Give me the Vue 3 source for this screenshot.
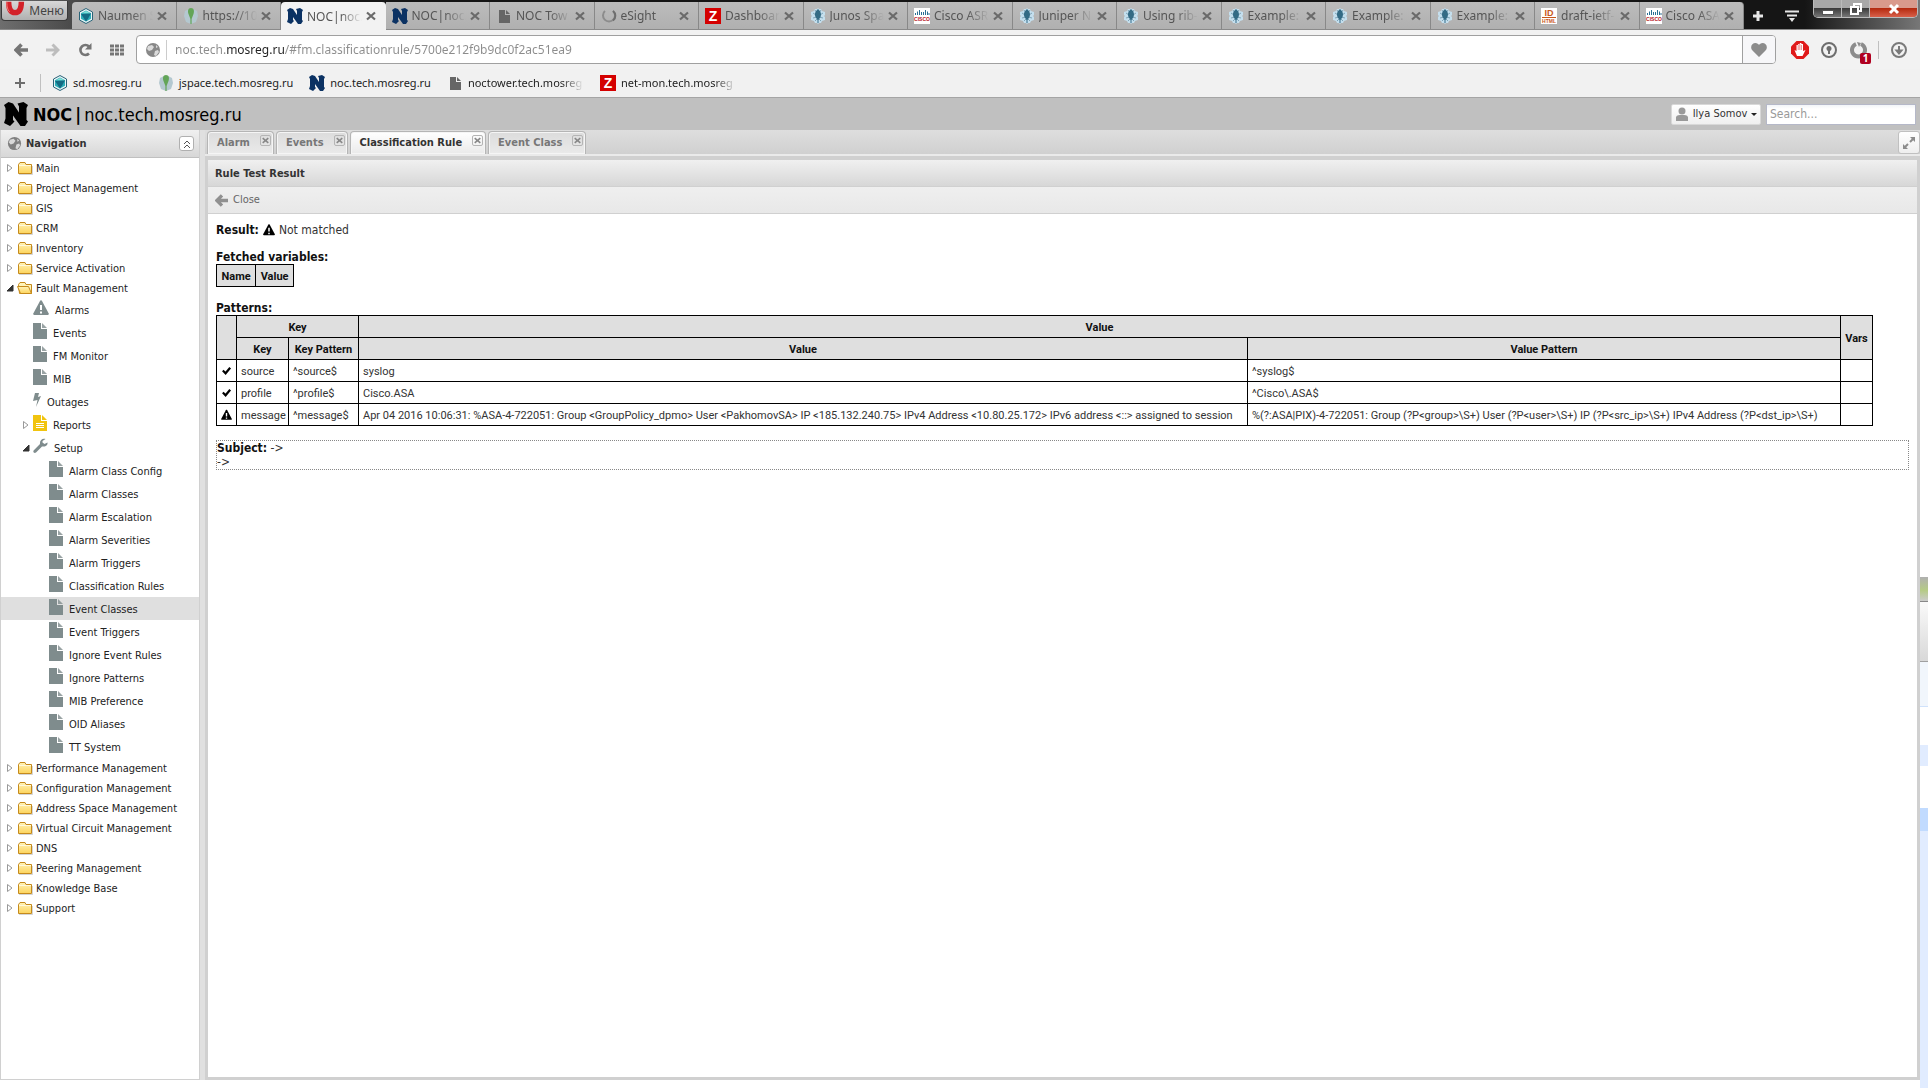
<!-- src/App.vue -->
<template>
  <!-- Shared icons -->
  <svg class="sprite" aria-hidden="true">
    <defs>
      <linearGradient id="folderFill" x1="0" y1="0" x2="0" y2="1">
        <stop offset="0" stop-color="#fff3b8" />
        <stop offset="1" stop-color="#fdd45c" />
      </linearGradient>
    </defs>
    <symbol id="naumen" viewBox="0 0 16 16">
      <path d="M8 0.5 14.5 4v8L8 15.5 1.5 12V4z" fill="#e8f3f5" stroke="#2a6478" />
      <path d="M8 2.5 13 5.2v5.6L8 13.5 3 10.8V5.2z" fill="#2badb8" />
      <path d="M3 6l10-.8-3 5.5L8 13.5z" fill="#146b83" />
      <path d="M4 5.3 8 3l4.5 2.3z" fill="#7fe0d8" />
    </symbol>
    <symbol id="jspace" viewBox="0 0 16 16">
      <path d="M2 3l4-2 2 2 2-2 4 2 1 5-2 6-5 2-5-2-2-6z" fill="#b4c8d0" />
      <path d="M8 0c3 0 3.500 3 2.500 6L8.600 11v5H7.400v-5L5.500 6C4.500 3 5 0 8 0z" fill="#63a558" />
    </symbol>
    <symbol id="noc" viewBox="0 0 16 16">
      <path d="M0 2l3-2 3 1 4 6V3L9 1l4-1 3 2-1 2v8l1 1-2 3h-3L6 9v3l1 1-3 3-4-2 1-3V4z" />
    </symbol>
    <symbol id="page" viewBox="0 0 16 16">
      <path d="M3 2h6v5h5v8H3z" />
      <path d="M10 2l4 4h-4z" />
    </symbol>
    <symbol id="spinner" viewBox="0 0 16 16">
      <path d="M4 3a6 6 0 1 0 8 0" fill="none" stroke="#8c8c8c" stroke-width="2" />
      <path d="M12 3a6 6 0 0 1 0 9.500" fill="none" stroke="#6e6e6e" stroke-width="2" />
    </symbol>
    <symbol id="zabbix" viewBox="0 0 16 16">
      <rect width="16" height="16" fill="#d40000" />
    </symbol>
    <symbol id="juniper" viewBox="0 0 16 16">
      <path d="M5 1h2l1-1 1 1h2l1 2 3 1v3l-1 1 1 1v3l-3 1-1 2H9l-1 1-1-1H5l-1-2-3-1V9l1-1-1-1V4l3-1z" fill="#c4dfee" />
      <path d="M3 5l3 2M13 5l-3 2M3 10l4-1M13 10l-4-1M5 2l2 3M11 2L9 5M5 13l2-2M11 13l-2-2" stroke="#7fa5b8" />
      <path d="M8 1c2 2 4 4 2.500 8l-2 3v3h-1v-3l-2-3C4 5 6 3 8 1z" fill="#336b85" />
    </symbol>
    <symbol id="cisco" viewBox="0 0 16 16">
      <rect width="16" height="16" fill="#fff" />
      <path d="M1.500 5v2M3.500 3.500V7M5.500 2v5M7.500 4v3M9.500 4v3M11.500 2v5M13.500 3.500V7M15 5v2" stroke="#2a6f94" />
    </symbol>
    <symbol id="ietf" viewBox="0 0 16 16">
      <rect width="16" height="16" fill="#fff" />
      <path d="M1 9.500h14" stroke="#c8581c" />
    </symbol>
    <symbol id="cross" viewBox="0 0 10 10">
      <path d="M1 1.500l8 7M9 1.500l-8 7" fill="none" stroke="currentColor" stroke-width="2.200" />
    </symbol>
    <symbol id="arrow" viewBox="0 0 14 14">
      <path d="M7.500 1.500L2 7l5.500 5.500M2 7h12" fill="none" stroke="currentColor" stroke-width="3.600" />
    </symbol>
    <symbol id="folder" viewBox="0 0 16 16">
      <path d="M1.500 13.500v-9l1.500-2h5l1 2h5.500v9z" fill="url(#folderFill)" stroke="#c58a1c" />
      <path d="M2 5.500h12" stroke="#fff9dc" />
      <path d="M2 14.500h13.500V6" fill="none" stroke="#b9b9b9" stroke-opacity=".6" />
    </symbol>
    <symbol id="folder-open" viewBox="0 0 16 16">
      <path d="M2.500 13.500l-1-9 1.500-2h5l1 2h5.500v9z" fill="#fff3b8" stroke="#c58a1c" />
      <path d="M3.500 13.500L.5 6.500h11l3 7z" fill="url(#folderFill)" stroke="#c58a1c" />
    </symbol>
    <symbol id="file" viewBox="0 0 14 16">
      <path d="M0 0h8v6h6v10H0z" />
      <path d="M9 0l5 5H9z" opacity=".8" />
    </symbol>
    <symbol id="report" viewBox="0 0 14 16">
      <path d="M0 0h8v6h6v10H0z" />
      <path d="M9 0l5 5H9z" />
      <path d="M3 8.500h8M3 10.500h8M3 12.500h8" stroke="#fff" />
    </symbol>
    <symbol id="warning" viewBox="0 0 16 16">
      <path d="M8 0l1 1 7 13-1 1H1l-1-1L7 1z" />
      <path d="M8 5v5M8 11.500v2" stroke="#fff" stroke-width="2" />
    </symbol>
    <symbol id="bolt" viewBox="0 0 8 16">
      <path d="M2 1h4L5 5l3-1-5 11 1.500-7L0 9z" />
    </symbol>
    <symbol id="wrench" viewBox="0 0 15 16">
      <path d="M14.500 4.500l-3 1.500-2-1.500V3l3-2c-3-1-6 1-5.500 5L.6 12.500c-1 2 1 3 2.400 2L9 8.500c3 .5 6-1 5.500-4z" />
    </symbol>
    <symbol id="check" viewBox="0 0 12 12">
      <path d="M2 5.500l3 3 5-6" fill="none" stroke="currentColor" stroke-width="2.400" />
    </symbol>
    <symbol id="globe" viewBox="0 0 16 16">
      <circle cx="8" cy="8" r="7" />
      <path d="M3 4l4-1 2 2-2 3-3 1-2-2zM10 9l3-1 1 2-3 4-2-1zM11 3l2 2-2 1z" fill="#fff" opacity=".7" />
    </symbol>
  </svg>

  <div class="screen">
    <div class="browser">
      <!-- Window tabs -->
      <div class="titlebar">
        <button class="menu-btn">
          <svg class="opera" viewBox="0 0 22 16">
            <path d="M4 0c0 9 3 12 7 12s7-3 7-12" fill="none" stroke="#d3222a" stroke-width="6" />
            <path d="M2 0c0 6 1 9 3 11" fill="none" stroke="#f58a8a" stroke-width="1" />
          </svg>
          <span>Меню</span>
        </button>
        <div class="window-tabs">
          <div v-for="(tab, i) in windowTabs" :key="i" class="window-tab" :class="{ active: tab.active }">
            <svg class="favicon" :class="tab.icon" viewBox="0 0 16 16">
              <use :href="'#' + tab.icon" />
              <text v-for="label in iconLabels[tab.icon]" :key="label.text" x="8" :y="label.y" :font-size="label.size">{{ label.text }}</text>
            </svg>
            <span class="window-tab-title">{{ tab.title }}</span>
            <button class="window-tab-close" aria-label="Close tab">
              <svg><use href="#cross" /></svg>
            </button>
          </div>
        </div>
        <div class="tab-tools">
          <button aria-label="New tab">
            <svg viewBox="0 0 14 14" width="14" height="14"><path d="M7 2v10M2 7h10" stroke="#e6e6e6" stroke-width="3" /></svg>
          </button>
          <button aria-label="Tab menu">
            <svg viewBox="0 0 14 14" width="14" height="14"><path d="M0 2.500h14M2 6.500h10" stroke="#e6e6e6" stroke-width="2" /><path d="M4 9h6l-3 4z" fill="#e6e6e6" /></svg>
          </button>
        </div>
        <div class="window-buttons">
          <button class="minimize" aria-label="Minimize">
            <svg viewBox="0 0 14 14"><rect x="1.500" y="8.500" width="11" height="4" fill="#fff" stroke="#555" /></svg>
          </button>
          <button class="restore" aria-label="Restore">
            <svg viewBox="0 0 14 14"><path d="M5 4V2h7v7h-2M2 5h7v7H2z" fill="none" stroke="#fff" stroke-width="2" /></svg>
          </button>
          <button class="quit" aria-label="Close window">
            <svg viewBox="0 0 14 14"><path d="M3 3l8 8M11 3l-8 8" stroke="#fff" stroke-width="3" /></svg>
          </button>
        </div>
      </div>

      <!-- Address bar -->
      <div class="address-row">
        <div class="nav-buttons">
          <button aria-label="Back"><svg viewBox="0 0 14 14"><use href="#arrow" /></svg></button>
          <button class="forward" aria-label="Forward"><svg viewBox="0 0 14 14"><path d="M6.500 1.500L12 7l-5.500 5.500M12 7H0" fill="none" stroke="currentColor" stroke-width="3" /></svg></button>
          <button aria-label="Reload"><svg viewBox="0 0 14 14"><path d="M11 10.500a5 5 0 1 1 0-7" fill="none" stroke="currentColor" stroke-width="2.600" /><path d="M13.500 0v6.500H7z" fill="currentColor" /></svg></button>
          <button aria-label="Speed Dial"><svg viewBox="0 0 14 14"><path d="M0 3h14M0 7h14M0 11h14" stroke="currentColor" stroke-width="3" stroke-dasharray="4 1" /></svg></button>
        </div>
        <div class="address-field">
          <svg class="site-icon"><use href="#globe" /></svg>
          <input type="text" aria-label="Address" value="noc.tech.mosreg.ru/#fm.classificationrule/5700e212f9b9dc0f2ac51ea9" />
          <button class="heart" aria-label="Add bookmark">
            <svg viewBox="0 0 16 14"><path d="M8 14L1.500 7.500C-1.500 4 1 0 4.500 0 6 0 7.500 1 8 2c.5-1 2-2 3.500-2 3.500 0 6 4 3 7.500z" fill="#8c8c8c" /></svg>
          </button>
        </div>
        <div class="extensions">
          <button aria-label="Adblock">
            <svg viewBox="0 0 18 18">
              <path d="M5.500 0h7L18 5.500v7L12.500 18h-7L0 12.500v-7z" fill="#e01b1b" />
              <path d="M6 15L3.500 9l2 1V4h1.700v-1h1.600v-1h1.600v1h1.600v7l2.500-1-3 6z" fill="#fff" />
              <path d="M7.200 4v5M8.800 3v6M10.400 4v5" stroke="#e01b1b" stroke-width=".5" />
            </svg>
          </button>
          <button aria-label="Password manager">
            <svg viewBox="0 0 18 18">
              <circle cx="9" cy="9" r="7" fill="none" stroke="#6e6e6e" stroke-width="2" />
              <circle cx="9" cy="7.500" r="2.500" fill="#6e6e6e" />
              <path d="M9 8v5" stroke="#6e6e6e" stroke-width="2" />
            </svg>
          </button>
          <button class="ghost" aria-label="Trackers">
            <svg viewBox="0 0 18 18"><path d="M7 3a6.500 6.500 0 1 0 5 0" fill="none" stroke="#8c8c8c" stroke-width="4" /><path d="M8 1l4 1-2 4z" fill="#8c8c8c" /></svg>
            <span class="badge">1</span>
          </button>
          <span class="divider"></span>
          <button aria-label="Downloads">
            <svg viewBox="0 0 18 18">
              <circle cx="9" cy="9" r="7" fill="none" stroke="#7a7a7a" stroke-width="2" />
              <path d="M9 5v5M6.500 9.500h5L9 12.500z" stroke="#7a7a7a" stroke-width="2" fill="#7a7a7a" />
            </svg>
          </button>
        </div>
      </div>

      <!-- Bookmarks -->
      <div class="bookmarks">
        <button class="add-bookmark" aria-label="Add bookmark">
          <svg viewBox="0 0 10 10"><path d="M5 0v10M0 5h10" stroke="#6e6e6e" stroke-width="2" /></svg>
        </button>
        <a v-for="mark in bookmarks" :key="mark.title" href="#" class="bookmark">
          <svg class="favicon" :class="mark.icon" viewBox="0 0 16 16">
            <use :href="'#' + mark.icon" />
            <text v-for="label in iconLabels[mark.icon]" :key="label.text" x="8" :y="label.y" :font-size="label.size">{{ label.text }}</text>
          </svg>
          <span :class="{ cut: mark.cut }">{{ mark.title }}</span>
        </a>
      </div>

      <!-- Application header -->
      <header class="app-header">
        <svg class="logo" viewBox="0 0 16 16"><use href="#noc" /></svg>
        <h1><b>NOC</b><b>|</b><span>noc.tech.mosreg.ru</span></h1>
        <button class="user-btn">
          <svg viewBox="0 0 14 14" width="14" height="14"><circle cx="7" cy="4" r="3.500" /><path d="M1 14V10c1-2 3-2 6-2s5 0 6 2v4z" /></svg>
          <span>Ilya Somov</span>
          <i class="caret"></i>
        </button>
        <input class="search" type="text" placeholder="Search..." aria-label="Search" />
      </header>

      <div class="workspace">
        <!-- Navigation tree -->
        <nav class="sidebar">
          <div class="sidebar-header">
            <svg class="globe"><use href="#globe" /></svg>
            <span>Navigation</span>
            <button class="collapse" aria-label="Collapse">
              <svg viewBox="0 0 8 8" width="8" height="8"><path d="M1 4l3-3 3 3M1 8l3-3 3 3" fill="none" stroke="#555" /></svg>
            </button>
          </div>
          <ul class="tree">
            <li
              v-for="node in nodes"
              :key="node.title"
              :class="['level-' + node.level, { selected: node.title === 'Event Classes' }]"
            >
              <svg class="expander" viewBox="0 0 8 10">
                <path v-if="node.state === 'open'" d="M7 2v6H1z" fill="#333" stroke="#333" />
                <path v-else-if="node.state === 'closed'" d="M1.500 1.500v7L6 5z" fill="#fff" stroke="#999" />
              </svg>
              <svg class="node-icon" :class="node.icon"><use :href="'#' + node.icon" /></svg>
              <a href="#">{{ node.title }}</a>
            </li>
          </ul>
        </nav>

        <main class="main">
          <div class="app-tabs">
            <div v-for="tab in appTabs" :key="tab" class="app-tab" :class="{ active: tab === activeTab }">
              <button class="app-tab-title" @click="activeTab = tab">{{ tab }}</button>
              <button class="app-tab-close" aria-label="Close"><svg><use href="#cross" /></svg></button>
            </div>
            <button class="expand" aria-label="Full screen">
              <svg viewBox="0 0 14 14" width="14" height="14"><path d="M8 1h5v5zM1 8v5h5z" /><path d="M8 6l4-4M6 8l-4 4" stroke="#8c8c8c" stroke-width="2" /></svg>
            </button>
          </div>

          <section class="panel">
            <h2>Rule Test Result</h2>
            <div class="toolbar">
              <button>
                <svg viewBox="0 0 14 14" width="13" height="13"><use href="#arrow" /></svg>
                Close
              </button>
            </div>
            <div class="panel-body">
              <p class="result">
                <b>Result:</b>
                <svg class="mark"><use href="#warning" /></svg>
                Not matched
              </p>

              <h3>Fetched variables:</h3>
              <table class="variables">
                <thead>
                  <tr><th>Name</th><th>Value</th></tr>
                </thead>
              </table>

              <h3>Patterns:</h3>
              <table class="patterns">
                <colgroup>
                  <col class="col-mark" />
                  <col class="col-key" />
                  <col class="col-key-pattern" />
                  <col class="col-value" />
                  <col class="col-value-pattern" />
                  <col class="col-vars" />
                </colgroup>
                <thead>
                  <tr>
                    <th rowspan="2"></th>
                    <th colspan="2">Key</th>
                    <th colspan="2">Value</th>
                    <th rowspan="2">Vars</th>
                  </tr>
                  <tr>
                    <th>Key</th>
                    <th>Key Pattern</th>
                    <th>Value</th>
                    <th>Value Pattern</th>
                  </tr>
                </thead>
                <tbody>
                  <tr v-for="row in patterns" :key="row.key">
                    <td class="mark-cell"><svg><use :href="row.ok ? '#check' : '#warning'" /></svg></td>
                    <td>{{ row.key }}</td>
                    <td>{{ row.keyPattern }}</td>
                    <td>{{ row.value }}</td>
                    <td>{{ row.valuePattern }}</td>
                    <td></td>
                  </tr>
                </tbody>
              </table>

              <div class="subject">
                <div><b>Subject:</b> -&gt;</div>
                <div>-&gt;</div>
              </div>
            </div>
          </section>
        </main>
      </div>
    </div>

    <!-- Sliver of the window behind -->
    <aside class="behind">
      <div class="behind-picture"></div>
      <div class="behind-toolbar"></div>
      <div class="behind-head"></div>
      <div class="behind-row"></div>
      <div class="behind-row tinted"></div>
      <div class="behind-row"></div>
      <div class="behind-row picked"></div>
      <div class="behind-rest"></div>
    </aside>
  </div>
</template>

<script setup>
import { ref } from 'vue'

const activeTab = ref('Classification Rule')
const appTabs = ['Alarm', 'Events', 'Classification Rule', 'Event Class']

// Lettering that sits on top of some favicons
const iconLabels = {
  zabbix: [{ text: 'Z', y: 13, size: 14 }],
  cisco: [{ text: 'CISCO', y: 13, size: 5 }],
  ietf: [
    { text: 'ID', y: 8, size: 9 },
    { text: 'HTML', y: 15, size: 5 }
  ]
}

const windowTabs = [
  { icon: 'naumen', title: 'Naumen S' },
  { icon: 'jspace', title: 'https://10' },
  { icon: 'noc', title: 'NOC|noc.t', active: true },
  { icon: 'noc', title: 'NOC|noc.t' },
  { icon: 'page', title: 'NOC Tow' },
  { icon: 'spinner', title: 'eSight' },
  { icon: 'zabbix', title: 'Dashboar' },
  { icon: 'juniper', title: 'Junos Spa' },
  { icon: 'cisco', title: 'Cisco ASR' },
  { icon: 'juniper', title: 'Juniper N' },
  { icon: 'juniper', title: 'Using rib-' },
  { icon: 'juniper', title: 'Example:' },
  { icon: 'juniper', title: 'Example:' },
  { icon: 'juniper', title: 'Example:' },
  { icon: 'ietf', title: 'draft-ietf-' },
  { icon: 'cisco', title: 'Cisco ASA' }
]

const bookmarks = [
  { icon: 'naumen', title: 'sd.mosreg.ru' },
  { icon: 'jspace', title: 'jspace.tech.mosreg.ru' },
  { icon: 'noc', title: 'noc.tech.mosreg.ru' },
  { icon: 'page', title: 'noctower.tech.mosreg', cut: true },
  { icon: 'zabbix', title: 'net-mon.tech.mosreg', cut: true }
]

const closed = (title) => ({ title, level: 1, icon: 'folder', state: 'closed' })
const setupItem = (title) => ({ title, level: 3, icon: 'file' })

const nodes = [
  ...['Main', 'Project Management', 'GIS', 'CRM', 'Inventory', 'Service Activation'].map(closed),
  { title: 'Fault Management', level: 1, icon: 'folder-open', state: 'open' },
  { title: 'Alarms', level: 2, icon: 'warning' },
  { title: 'Events', level: 2, icon: 'file' },
  { title: 'FM Monitor', level: 2, icon: 'file' },
  { title: 'MIB', level: 2, icon: 'file' },
  { title: 'Outages', level: 2, icon: 'bolt' },
  { title: 'Reports', level: 2, icon: 'report', state: 'closed' },
  { title: 'Setup', level: 2, icon: 'wrench', state: 'open' },
  ...[
    'Alarm Class Config',
    'Alarm Classes',
    'Alarm Escalation',
    'Alarm Severities',
    'Alarm Triggers',
    'Classification Rules',
    'Event Classes',
    'Event Triggers',
    'Ignore Event Rules',
    'Ignore Patterns',
    'MIB Preference',
    'OID Aliases',
    'TT System'
  ].map(setupItem),
  ...[
    'Performance Management',
    'Configuration Management',
    'Address Space Management',
    'Virtual Circuit Management',
    'DNS',
    'Peering Management',
    'Knowledge Base',
    'Support'
  ].map(closed)
]

const patterns = [
  { ok: true, key: 'source', keyPattern: '^source$', value: 'syslog', valuePattern: '^syslog$' },
  { ok: true, key: 'profile', keyPattern: '^profile$', value: 'Cisco.ASA', valuePattern: '^Cisco\\.ASA$' },
  {
    ok: false,
    key: 'message',
    keyPattern: '^message$',
    value: 'Apr 04 2016 10:06:31: %ASA-4-722051: Group <GroupPolicy_dpmo> User <PakhomovSA> IP <185.132.240.75> IPv4 Address <10.80.25.172> IPv6 address <::> assigned to session',
    valuePattern: '%(?:ASA|PIX)-4-722051: Group (?P<group>\\S+) User (?P<user>\\S+) IP (?P<src_ip>\\S+) IPv4 Address (?P<dst_ip>\\S+)'
  }
]
</script>

<style>
body {
  margin: 0;
  background: #fff;
}
</style>

<style scoped>
* {
  box-sizing: border-box;
}

button,
input {
  font: inherit;
  color: inherit;
  border: none;
  background: none;
  padding: 0;
  margin: 0;
}

button {
  display: flex;
  align-items: center;
  justify-content: center;
}

a {
  color: inherit;
  text-decoration: none;
}

.sprite {
  position: absolute;
  width: 0;
  height: 0;
}

.screen {
  display: flex;
  min-height: 100vh;
  font-family: "DejaVu Sans Condensed", "DejaVu Sans", sans-serif;
  font-size: 11px;
  line-height: 14px;
  color: #333;
}

.browser {
  flex: 1;
  min-width: 0;
  display: flex;
  flex-direction: column;
  padding-bottom: 8px;
}

/* Title bar */
.titlebar {
  display: flex;
  height: 30px;
  padding-top: 2px;
  background: linear-gradient(to right, #6e6e6e 0, #4a4a4a 72px, #151515 220px, #151515 94%, #777 100%);
  border-bottom: 1px solid #8a8a8a;
  font-family: "Noto Sans", sans-serif;
  font-size: 12px;
  line-height: 17px;
}

.menu-btn {
  width: 67px;
  height: 20px;
  margin: -1px 4px 0 1px;
  gap: 4px;
  background: linear-gradient(#d8d8d8, #b0b0b0);
  border: 1px solid #3a3a3a;
  border-top: none;
  border-radius: 0 0 4px 4px;
  color: #444;
}

.opera {
  width: 20px;
  height: 16px;
  align-self: flex-start;
}

.window-tabs {
  flex: 1;
  min-width: 0;
  display: flex;
}

.window-tab {
  flex: 1;
  min-width: 0;
  display: flex;
  align-items: center;
  gap: 4px;
  padding: 0 9px 0 6px;
  background: linear-gradient(#bcbcbc, #b0b0b0);
  border-right: 1px solid #888;
  color: #555;
}

.window-tab:first-child {
  border-top-left-radius: 4px;
}

.window-tab:last-child {
  border-top-right-radius: 4px;
}

.window-tab.active {
  height: 28px;
  background: #f2f2f2;
  border-right-color: #f2f2f2;
  border-radius: 4px 4px 0 0;
}

.window-tab-title {
  flex: 1;
  min-width: 0;
  white-space: nowrap;
  mask-image: linear-gradient(to right, #000 60%, transparent 100%);
}

.window-tab-close {
  width: 10px;
  height: 10px;
  color: #6a6a6a;
}

.window-tab-close svg {
  width: 10px;
  height: 10px;
}

.favicon {
  width: 16px;
  height: 16px;
  flex: none;
}

.favicon text {
  font-family: "Liberation Sans", sans-serif;
  font-weight: bold;
  text-anchor: middle;
}

.favicon.noc {
  fill: #0b3263;
}

.favicon.page {
  fill: #666;
}

.favicon.zabbix {
  fill: #fff;
}

.favicon.cisco {
  fill: #b5121b;
}

.favicon.ietf {
  fill: #c8581c;
}

.tab-tools {
  display: flex;
  align-items: center;
  gap: 20px;
  width: 69px;
  padding-left: 7px;
}

.window-buttons {
  display: flex;
  height: 18px;
  margin: -2px 2px 0 0;
  border: 1px solid #bbb;
  border-top: none;
  border-radius: 0 0 5px 5px;
  overflow: hidden;
}

.window-buttons button {
  width: 28px;
  background: linear-gradient(#a8a8a8 45%, #3c3c3c 50%, #777);
  border-right: 1px solid #bbb;
}

.window-buttons svg {
  width: 14px;
  height: 14px;
}

.window-buttons .quit {
  width: 47px;
  background: linear-gradient(#d99a8c 45%, #b52b10 50%, #d8604a);
  border-right: none;
}

/* Address row */
.address-row {
  display: flex;
  align-items: center;
  height: 39px;
  background: #f2f2f2;
  font-family: "Noto Sans", sans-serif;
  font-size: 12px;
}

.nav-buttons {
  display: flex;
  gap: 18px;
  width: 136px;
  padding-left: 14px;
  color: #757575;
}

.nav-buttons svg {
  width: 14px;
  height: 14px;
}

.nav-buttons .forward {
  color: #bdbdbd;
}

.address-field {
  flex: 1;
  display: flex;
  align-items: center;
  height: 29px;
  background: #fff;
  border: 1px solid #a0a0a0;
  border-radius: 4px;
}

.site-icon {
  width: 16px;
  height: 16px;
  margin: 0 5px 0 8px;
  fill: #888;
}

.address-field input {
  flex: 1;
  height: 20px;
  padding-left: 8px;
  border-left: 1px solid #ccc;
  color: transparent;
  background: linear-gradient(to right, #8c8c8c 60px, #222 60px, #222 118px, #8c8c8c 118px);
  background-clip: text;
}

.heart {
  width: 33px;
  height: 27px;
  border-left: 1px solid #a0a0a0;
  background: #f7f7f9;
  border-radius: 0 3px 3px 0;
}

.heart svg {
  width: 16px;
  height: 14px;
}

.extensions {
  display: flex;
  align-items: center;
  gap: 11px;
  padding: 0 12px 0 15px;
}

.extensions svg {
  width: 18px;
  height: 18px;
}

.extensions .divider {
  width: 1px;
  height: 18px;
  background: #c0c0c0;
}

.ghost {
  position: relative;
}

.badge {
  position: absolute;
  right: -4px;
  bottom: -5px;
  width: 11px;
  height: 11px;
  border-radius: 2px;
  background: #b00020;
  color: #fff;
  font-size: 10px;
  font-weight: bold;
  line-height: 11px;
  text-align: center;
}

/* Bookmarks */
.bookmarks {
  display: flex;
  align-items: center;
  gap: 16px;
  height: 29px;
  background: #f1f1f1;
  border-bottom: 1px solid #a5a5a5;
  color: #222;
  font-family: "Noto Sans", sans-serif;
  line-height: 16px;
}

.add-bookmark {
  width: 36px;
  height: 18px;
  margin: 0 -5px 0 5px;
  border-right: 1px solid #c0c0c0;
}

.add-bookmark svg {
  width: 10px;
  height: 10px;
  margin-right: 6px;
}

.bookmark {
  display: flex;
  align-items: center;
  gap: 5px;
}

.cut {
  width: 116px;
  white-space: nowrap;
  mask-image: linear-gradient(to right, #000 80%, transparent 100%);
}

/* Application header */
.app-header {
  display: flex;
  align-items: center;
  height: 32px;
  padding: 0 4px;
  background: #c0c0c0;
}

.logo {
  width: 24px;
  height: 24px;
  fill: #000;
}

.app-header h1 {
  flex: 1;
  display: flex;
  gap: 3px;
  margin: 0;
  padding: 1px 0 0 5px;
  font-size: 18px;
  line-height: 22px;
  font-weight: normal;
  color: #000;
}

.user-btn {
  width: 90px;
  height: 21px;
  margin-right: 5px;
  gap: 4px;
  background: linear-gradient(#fff, #efefef);
  border: 1px solid #d8d8d8;
  border-radius: 2px;
  white-space: nowrap;
}

.user-btn svg {
  fill: #999;
}

.caret {
  border: 3px solid transparent;
  border-top-color: #222;
  border-bottom: none;
}

.search {
  width: 150px;
  height: 21px;
  padding: 0 3px;
  background: linear-gradient(#f2f5f8, #fff 4px);
  border: 1px solid #b5b8c8;
  font-size: 12px;
}

.search::placeholder {
  color: #999;
}

/* Sidebar */
.workspace {
  flex: 1;
  display: flex;
  background: #e0e0e0;
}

.sidebar {
  width: 200px;
  margin-right: 5px;
  background: #fff;
  border: 1px solid #d0d0d0;
  border-top: none;
}

.sidebar-header {
  display: flex;
  align-items: center;
  gap: 4px;
  height: 28px;
  padding: 0 5px 0 6px;
  background: linear-gradient(#f0f0f0, #d7d7d7);
  border-bottom: 1px solid #c0c0c0;
  font-weight: bold;
}

.globe {
  width: 15px;
  height: 15px;
  fill: #808080;
}

.collapse {
  width: 15px;
  height: 15px;
  margin-left: auto;
  background: #fff;
  border: 1px solid #b0b0b0;
  border-radius: 3px;
}

.tree {
  list-style: none;
  margin: 0;
  padding: 0;
  color: #222;
}

.tree li {
  display: flex;
  align-items: center;
  height: 23px;
  white-space: nowrap;
}

.tree a {
  padding-top: 2px;
}

.tree .level-1 {
  height: 20px;
  padding-left: 5px;
}

.tree .level-2 {
  padding-left: 21px;
}

.tree .level-3 {
  padding-left: 37px;
}

.tree .selected {
  background: #dfdfdf;
}

.expander {
  width: 8px;
  height: 10px;
  margin-right: 3px;
}

.node-icon {
  width: 14px;
  height: 16px;
  margin-right: 6px;
  margin-bottom: 4px;
  fill: #7f8c8d;
}

.level-1 .node-icon {
  width: 16px;
  margin-right: 3px;
  margin-bottom: 1px;
}

.node-icon.warning {
  width: 16px;
}

.node-icon.bolt {
  width: 8px;
}

.node-icon.wrench {
  width: 15px;
}

.node-icon.report {
  fill: #f1c40f;
}

/* Application tabs */
.main {
  flex: 1;
  min-width: 0;
  display: flex;
  flex-direction: column;
  background: #d0d0d0;
}

.app-tabs {
  display: flex;
  align-items: flex-end;
  gap: 2px;
  height: 26px;
  padding-left: 2px;
  background: linear-gradient(#dedede, #d0d0d0);
  border-bottom: 2px solid #eaeaea;
}

.app-tab {
  display: flex;
  gap: 10px;
  height: 23px;
  padding: 0 2px 0 9px;
  background: linear-gradient(#dcdcdc, #eaeaea);
  border: 1px solid #b5b5b5;
  border-bottom: none;
  border-radius: 4px 4px 0 0;
  box-shadow: inset 0 0 0 1px #f5f5f5;
  color: #777;
  font-weight: bold;
}

.app-tab.active {
  background: linear-gradient(#fff, #eaeaea);
  color: #333;
}

.app-tab-close {
  width: 11px;
  height: 11px;
  margin-top: 3px;
  border: 1px solid #b5b5b5;
  border-radius: 2px;
  color: #888;
}

.app-tab-close svg {
  width: 7px;
  height: 7px;
  flex: none;
}

.expand {
  width: 22px;
  height: 23px;
  margin-left: auto;
  background: linear-gradient(#fff, #eee);
  border: 1px solid #c0c0c0;
  border-radius: 3px;
}

.expand svg {
  fill: #8c8c8c;
}

/* Panel */
.panel {
  flex: 1;
  display: flex;
  flex-direction: column;
  margin: 4px 3px 3px;
  background: #fff;
}

.panel h2 {
  margin: 0;
  padding: 7px 7px 5px;
  background: linear-gradient(#f0f0f0, #d7d7d7);
  font-size: 11px;
  line-height: 14px;
}

.toolbar {
  display: flex;
  align-items: center;
  height: 28px;
  padding: 0 7px;
  background: linear-gradient(#efefef, #e8e8e8);
  border: 1px solid #d0d0d0;
  border-right: none;
  border-left: none;
}

.toolbar button {
  gap: 5px;
  color: #666;
}

.toolbar svg {
  color: #909090;
}

.panel-body {
  padding: 9px 8px;
  font-size: 12px;
}

.panel-body b,
.panel-body h3 {
  color: #111;
}

.panel-body h3 {
  margin: 0;
  font-size: 12px;
  line-height: 13px;
}

.result {
  display: flex;
  align-items: center;
  gap: 4px;
  margin: 0 0 14px;
}

.mark {
  width: 12px;
  height: 12px;
  fill: #000;
}

table {
  border-collapse: collapse;
  color: #333;
  font-family: Roboto, sans-serif;
  font-size: 11px;
  line-height: 13px;
}

th,
td {
  height: 22px;
  padding: 5px 4px 3px;
  border: 1px solid #000;
  text-align: left;
  white-space: nowrap;
}

th {
  background: #dfdfdf;
  color: #111;
  text-align: center;
}

.variables {
  width: 78px;
  margin-bottom: 15px;
}

.patterns {
  table-layout: fixed;
  width: 1656px;
  margin-bottom: 14px;
}

.col-mark {
  width: 20px;
}

.col-key {
  width: 52px;
}

.col-key-pattern {
  width: 70px;
}

.col-value {
  width: 889px;
}

.col-value-pattern {
  width: 593px;
}

.col-vars {
  width: 32px;
}

.mark-cell {
  padding: 0 4px;
  color: #000;
}

.mark-cell svg {
  display: block;
  width: 11px;
  height: 12px;
}

.subject {
  border: 1px dotted #888;
}

/* Window behind */
.behind {
  width: 8px;
  padding-top: 577px;
  display: flex;
  flex-direction: column;
}

.behind-picture {
  height: 25px;
  background: linear-gradient(#b0b0b0, #b5cb85 55%, #ccc);
  border-bottom: 1px solid #888;
}

.behind-toolbar {
  height: 60px;
  background: linear-gradient(#fafafa, #d8d8d8);
  border-bottom: 1px solid #a0a0a0;
}

.behind-head {
  height: 45px;
  background: #f1f6fc;
  border-bottom: 1px solid #d0e2fb;
}

.behind-row {
  height: 38px;
}

.behind-row.tinted {
  height: 21px;
  background: #e1ecff;
}

.behind-row.tinted + .behind-row {
  height: 42px;
}

.behind-row.picked {
  height: 23px;
  background: #c1dbff;
}

.behind-rest {
  flex: 1;
  background: #e1ecff;
}
</style>
